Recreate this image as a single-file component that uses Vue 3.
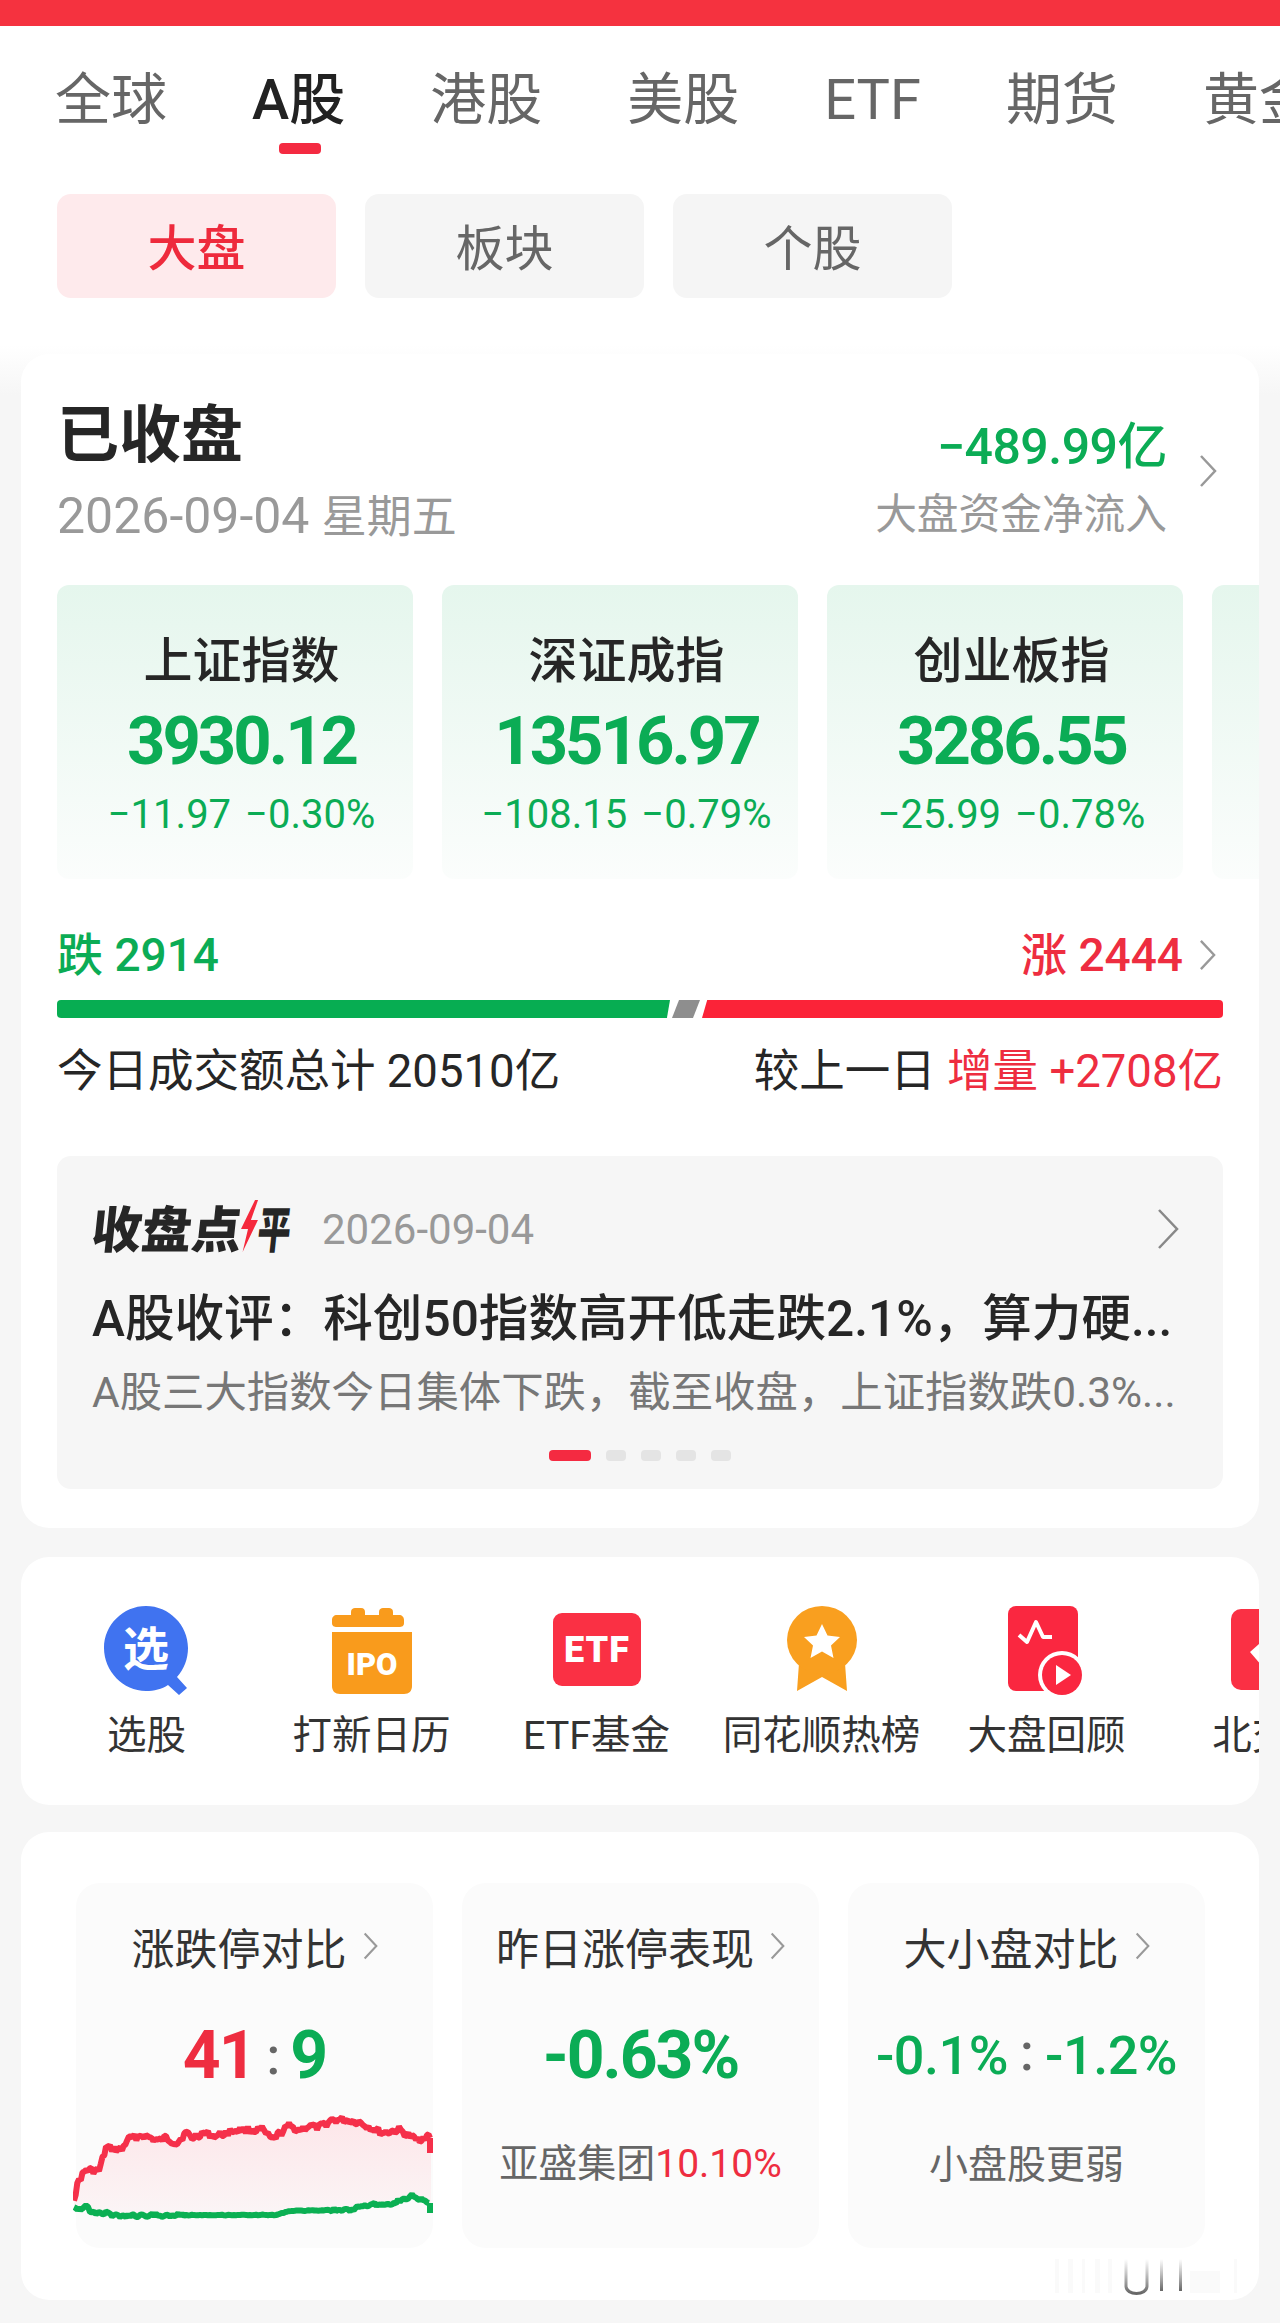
<script setup>
const tabs = ['全球', 'A股', '港股', '美股', 'ETF', '期货', '黄金']
const pills = ['大盘', '板块', '个股']
const indices = [
  { name: '上证指数', value: '3930.12', a: '−11.97', b: '−0.30%' },
  { name: '深证成指', value: '13516.97', a: '−108.15', b: '−0.79%' },
  { name: '创业板指', value: '3286.55', a: '−25.99', b: '−0.78%' },
  { name: '', value: '', a: '', b: '' }
]
const shortcuts = ['选股', '打新日历', 'ETF基金', '同花顺热榜', '大盘回顾', '北交所']

const redKeys = [[75,2200],[80,2182],[87,2172],[100,2173],[107,2150],[123,2152],[128,2142],[143,2137],[160,2143],[167,2140],[178,2145],[187,2135],[193,2140],[203,2135],[217,2138],[237,2132],[263,2132],[273,2142],[290,2128],[300,2132],[310,2128],[320,2130],[333,2122],[347,2122],[360,2124],[383,2135],[400,2132],[417,2142],[428,2138],[431,2140]]
const greenKeys = [[75,2208],[80,2211],[87,2208],[93,2215],[107,2215],[117,2218],[187,2217],[277,2217],[290,2213],[333,2212],[353,2212],[360,2208],[393,2205],[413,2198],[430,2205]]

function jagged(keys, amp, seed) {
  let s = seed
  const rnd = () => {
    s = (s * 9301 + 49297) % 233280
    return s / 233280 - 0.5
  }
  const pts = []
  for (let i = 0; i < keys.length - 1; i++) {
    const [x0, y0] = keys[i]
    const [x1, y1] = keys[i + 1]
    const n = Math.max(1, Math.round((x1 - x0) / 2))
    for (let j = 0; j < n; j++) {
      const t = j / n
      const a = typeof amp === 'function' ? amp(x0) : amp
      pts.push([x0 + (x1 - x0) * t, y0 + (y1 - y0) * t + rnd() * a])
    }
  }
  pts.push(keys[keys.length - 1])
  return pts
}
const fmt = p => p.map(q => q[0].toFixed(1) + ',' + q[1].toFixed(1)).join(' ')
const redPts = jagged(redKeys, 7, 17)
const greenPts = jagged(greenKeys, x => (x > 150 && x < 300 ? 0.8 : 3.5), 91)
const redLine = fmt(redPts)
const greenLine = fmt(greenPts)
const areaFill = redLine + ' 432,2155 432,2205 ' + greenKeys.slice().reverse().map(q => q.join(',')).join(' ')
</script>

<template>
  <div class="page">
    <div class="top-bar"></div>
    <div class="head">
      <div class="tabs">
        <span v-for="t in tabs" :key="t" class="tab" :class="{ on: t === 'A股' }">{{ t }}</span>
      </div>
      <div class="pills">
        <span v-for="p in pills" :key="p" class="pill" :class="{ on: p === '大盘' }">{{ p }}</span>
      </div>
    </div>

    <section class="card market">
      <div class="status">
        <div>
          <div class="closed">已收盘</div>
          <div class="date">2026-09-04 <span class="date-cn">星期五</span></div>
        </div>
        <div class="flow">
          <div class="flow-text">
            <div class="flow-num">−489.99亿</div>
            <div class="flow-label">大盘资金净流入</div>
          </div>
          <svg class="chev flow-chev" viewBox="0 0 18 32"><path d="M2 1 16 16 2 31" /></svg>
        </div>
      </div>

      <div class="indices">
        <div v-for="(it, i) in indices" :key="i" class="index">
          <div class="index-name">{{ it.name }}</div>
          <div class="index-value">{{ it.value }}</div>
          <div class="index-sub"><span>{{ it.a }}</span><span>{{ it.b }}</span></div>
        </div>
      </div>

      <div class="updown">
        <span class="green">跌 2914</span>
        <span class="up-right"><span class="red">涨 2444</span><svg class="chev small" viewBox="0 0 18 32"><path d="M2 1 16 16 2 31" /></svg></span>
      </div>
      <div class="bar">
        <div class="bar-g"></div>
        <div class="bar-m"></div>
        <div class="bar-r"></div>
      </div>
      <div class="turnover">
        <span>今日成交额总计 20510亿</span>
        <span>较上一日 <span class="red">增量 +2708亿</span></span>
      </div>

      <div class="review">
        <div class="review-head">
          <div class="logo">
            <span>收盘点</span>
            <svg class="bolt" viewBox="0 0 18 52"><path d="M12 0 1 29h7L5 52 17 20h-7l5-20z" /></svg>
            <span class="logo-end">平</span>
          </div>
          <span class="review-date">2026-09-04</span>
          <svg class="chev review-chev" viewBox="0 0 22 40"><path d="M2 1 20 20 2 39" /></svg>
        </div>
        <div class="review-title">A股收评：科创50指数高开低走跌2.1%，算力硬...</div>
        <div class="review-sub">A股三大指数今日集体下跌，截至收盘，上证指数跌0.3%...</div>
        <div class="dots"><i class="on"></i><i></i><i></i><i></i><i></i></div>
      </div>
    </section>

    <section class="card shortcuts">
      <div v-for="(s, i) in shortcuts" :key="s" class="shortcut">
        <svg v-if="i === 0" class="ico" viewBox="0 0 90 90">
          <path d="M44 1C21 1 2 20 2 43s19 43 42 43c8 0 16-2 22-6l11 10 8-7-10-11c7-8 11-18 11-29C86 20 67 1 44 1z" fill="#4073f0" />
          <text x="44" y="60" text-anchor="middle" class="ico-txt xuan">选</text>
        </svg>
        <svg v-else-if="i === 1" class="ico" viewBox="0 0 90 90">
          <path d="M24 7c0-3 2-4 4-4h6c3 0 4 2 4 4v3h14V7c0-3 2-4 4-4h6c2 0 4 1 4 4v3h6c3 0 5 2 5 5v3c0 3-2 4-5 4H10c-3 0-5-1-5-4v-3c0-3 2-5 5-5h14z" fill="#f99b1c" />
          <path d="M5 27h80v54c0 5-3 8-8 8H13c-5 0-8-3-8-8z" fill="#f99b1c" />
          <text x="45" y="70" text-anchor="middle" class="ico-txt ipo">IPO</text>
        </svg>
        <svg v-else-if="i === 2" class="ico" viewBox="0 0 90 90">
          <rect x="1" y="8" width="88" height="73" rx="9" fill="#fa3044" />
          <text x="45" y="57" text-anchor="middle" class="ico-txt etf">ETF</text>
        </svg>
        <svg v-else-if="i === 3" class="ico" viewBox="0 0 90 90">
          <path d="M22 58 20 86l25-14 25 14-2-28z" fill="#f99f1f" />
          <ellipse cx="45" cy="35" rx="35" ry="34" fill="#f99f1f" />
          <path d="M45 19l5.500 11.500 12.500 1.500-9 8.500 2.500 12.500L45 46.500 33.500 53 36 40.500 27 32l12.500-1.500z" fill="#fff" />
        </svg>
        <svg v-else-if="i === 4" class="ico" viewBox="0 0 90 90">
          <rect x="6" y="1" width="70" height="85" rx="8" fill="#fa2740" />
          <path d="M17 30l8 7 9-20 7 15h9" fill="none" stroke="#fff" stroke-width="4" stroke-linejoin="round" />
          <circle cx="60" cy="70" r="24" fill="#fff" />
          <circle cx="60" cy="70" r="20" fill="#fa2740" />
          <path d="M54 60l15 10-15 10z" fill="#fff" />
        </svg>
        <svg v-else class="ico" viewBox="0 0 90 90">
          <rect x="4" y="4" width="78" height="81" rx="10" fill="#fa3044" />
          <path d="M23 47 42 30l19 17-19 22z" fill="#fff" />
        </svg>
        <span class="shortcut-label">{{ s }}</span>
      </div>
    </section>

    <section class="card stats">
      <div class="tile">
        <div class="tile-title">涨跌停对比<svg class="chev tiny" viewBox="0 0 18 32"><path d="M2 1 16 16 2 31" /></svg></div>
        <div class="tile-num"><span class="red">41</span><span class="colon">:</span><span class="green">9</span></div>
        <svg class="chart" viewBox="74 2114 360 110">
          <defs>
            <linearGradient id="areaGrad" x1="0" y1="0" x2="0" y2="1">
              <stop offset="0" stop-color="#fde6e9" />
              <stop offset="1" stop-color="#fbf5f6" />
            </linearGradient>
          </defs>
          <polygon :points="areaFill" fill="url(#areaGrad)" />
          <polyline :points="greenLine" class="line" stroke="#0bb053" />
          <polyline :points="redLine" class="line" stroke="#f5304a" />
          <path d="M431 2140v15" stroke="#f5304a" stroke-width="6" />
          <path d="M431 2205v10" stroke="#0bb053" stroke-width="6" />
        </svg>
      </div>
      <div class="tile">
        <div class="tile-title">昨日涨停表现<svg class="chev tiny" viewBox="0 0 18 32"><path d="M2 1 16 16 2 31" /></svg></div>
        <div class="tile-num green">-0.63%</div>
        <div class="tile-sub">亚盛集团<span class="red">10.10%</span></div>
      </div>
      <div class="tile">
        <div class="tile-title">大小盘对比<svg class="chev tiny" viewBox="0 0 18 32"><path d="M2 1 16 16 2 31" /></svg></div>
        <div class="tile-num compact green">-0.1%<span class="colon">:</span>-1.2%</div>
        <div class="tile-sub">小盘股更弱</div>
      </div>
      <svg class="mark" viewBox="0 0 190 38" aria-hidden="true">
        <defs>
          <linearGradient id="markGrad" x1="0" y1="0" x2="0" y2="1">
            <stop offset="0" stop-color="#555" stop-opacity="0" />
            <stop offset="1" stop-color="#333" stop-opacity=".75" />
          </linearGradient>
        </defs>
        <g fill="#eee" opacity=".25">
          <rect x="5" y="2" width="4" height="34" /><rect x="18" y="2" width="5" height="34" /><rect x="32" y="2" width="3" height="34" />
          <rect x="45" y="2" width="5" height="34" /><rect x="58" y="2" width="4" height="34" /><rect x="140" y="14" width="30" height="22" />
          <rect x="184" y="2" width="3" height="34" />
        </g>
        <path d="M76 2v27c0 10 21 10 21 0V2" fill="none" stroke="url(#markGrad)" stroke-width="3" />
        <rect x="110" y="2" width="3" height="32" fill="url(#markGrad)" />
        <rect x="129" y="2" width="3" height="32" fill="url(#markGrad)" />
      </svg>
    </section>
  </div>
</template>

<style>
html, body { background: #f6f6f6; }
</style>

<style scoped>
.page {
  width: 1280px;
  height: 2323px;
  overflow: hidden;
  background: linear-gradient(#fff 345px, #f6f6f6 395px);
  font-family: "Noto Sans CJK SC", "Noto Sans", sans-serif;
  color: #262626;
}
.green { color: #0bac55; }
.red { color: #ee2d40; }
.top-bar { height: 26px; background: #f5323f; }
.head {
  height: 328px;
  box-sizing: border-box;
  padding: 42px 0 0 55px;
  overflow: hidden;
}
.tabs { display: flex; gap: 85px; height: 126px; white-space: nowrap; }
.tab {
  position: relative;
  font-family: "Roboto", "Noto Sans CJK SC", sans-serif;
  font-size: 56px;
  line-height: 64px;
  color: #666;
  height: 64px;
}
.tab.on { color: #222; font-weight: 500; }
.tab.on::after {
  content: "";
  position: absolute;
  left: 27px;
  top: 75px;
  width: 42px;
  height: 11px;
  border-radius: 4px;
  background: #f42a41;
}
.pills { display: flex; gap: 29px; margin-left: 2px; }
.pill {
  width: 279px;
  height: 104px;
  border-radius: 14px;
  background: #f5f5f5;
  color: #666;
  font-size: 49px;
  line-height: 102px;
  text-align: center;
}
.pill.on { background: #feeaec; color: #ee2a3c; font-weight: 500; }

.card { margin: 0 21px; background: #fff; border-radius: 28px; }
.market { height: 1174px; box-sizing: border-box; padding: 38px 36px 0; overflow: hidden; }
.status { display: flex; justify-content: space-between; height: 193px; }
.closed { font-size: 62px; line-height: 76px; font-weight: 700; color: #262626; }
.date { font-family: "Roboto", "Noto Sans CJK SC", sans-serif; font-size: 50px; line-height: 56px; margin-top: 20px; color: #999; white-space: nowrap; }
.date-cn { font-size: 45px; }
.flow { display: flex; gap: 32px; margin-right: 6px; }
.flow-text { text-align: right; padding-top: 26px; }
.flow-num { font-family: "Roboto", "Noto Sans CJK SC", sans-serif; font-size: 50px; line-height: 58px; font-weight: 500; color: #0bac55; letter-spacing: -0.5px; }
.flow-label { font-size: 41.700px; line-height: 54px; color: #999; margin-top: 8px; }
.chev { fill: none; stroke: #999; stroke-width: 2.500; }
.flow-chev { width: 18px; height: 32px; margin-top: 63px; }

.indices { display: flex; gap: 29px; height: 294px; margin-right: -36px; }
.index {
  flex: 0 0 356px;
  height: 294px;
  box-sizing: border-box;
  padding: 42px 0 0 13px;
  border-radius: 12px;
  text-align: center;
  background: linear-gradient(#e5f6ed, #fbfdfc);
}
.index-name { font-size: 49px; line-height: 60px; font-weight: 500; color: #262626; }
.index-value { font-family: "Roboto", sans-serif; font-size: 67px; line-height: 74px; font-weight: 700; letter-spacing: -3px; color: #0bac55; margin-top: 17px; }
.index-sub {
  display: flex;
  justify-content: center;
  gap: 14px;
  font-family: "Roboto", sans-serif;
  font-size: 40px;
  line-height: 46px;
  color: #0bac55;
  margin-top: 14px;
}

.updown { display: flex; justify-content: space-between; height: 75px; margin-top: 46px; font-family: "Roboto", "Noto Sans CJK SC", sans-serif; font-size: 46px; line-height: 60px; font-weight: 500; }
.up-right { display: flex; align-items: center; height: 60px; gap: 16px; margin-right: 7px; }
.small { width: 17px; height: 32px; }
.bar { display: flex; height: 18px; gap: 2px; }
.bar-g { width: 613px; background: #07ad52; border-radius: 4px 0 0 4px; clip-path: polygon(0 0, 100% 0, 99.500% 100%, 0 100%); }
.bar-m { width: 28px; margin-left: 0; background: #8e8e8e; clip-path: polygon(25% 0, 100% 0, 75% 100%, 0 100%); }
.bar-r { flex: 1; background: #fb2338; border-radius: 0 4px 4px 0; clip-path: polygon(1% 0, 100% 0, 100% 100%, 0 100%); }
.turnover { display: flex; justify-content: space-between; font-family: "Roboto", "Noto Sans CJK SC", sans-serif; font-size: 45.500px; line-height: 60px; margin-top: 24px; color: #262626; }

.review {
  position: relative;
  height: 333px;
  box-sizing: border-box;
  margin-top: 54px;
  padding: 41px 35px 0;
  background: #f6f6f6;
  border-radius: 14px;
}
.review-head { display: flex; align-items: center; height: 64px; }
.logo {
  display: flex;
  align-items: center;
  font-size: 50px;
  line-height: 60px;
  font-weight: 900;
  color: #262626;
  transform: skewX(-6deg) translateY(-3px);
  width: 200px;
  flex: none;
  white-space: nowrap;
}
.bolt { width: 18px; height: 52px; fill: #f5293c; flex: none; margin-left: -2px; }
.logo-end { display: inline-block; transform: scaleX(.66); transform-origin: left center; }
.review-date { font-family: "Roboto", sans-serif; font-size: 42px; color: #999; margin-left: 30px; }
.review-chev { width: 22px; height: 40px; margin-left: auto; margin-right: 9px; stroke: #888; }
.review-title { font-family: "Roboto", "Noto Sans CJK SC", sans-serif; font-size: 49.600px; line-height: 60px; font-weight: 500; color: #262626; margin-top: 28px; white-space: nowrap; }
.review-sub { font-family: "Roboto", "Noto Sans CJK SC", sans-serif; font-size: 42.400px; line-height: 56px; color: #777; margin-top: 16px; white-space: nowrap; }
.dots { position: absolute; top: 294px; left: 492px; display: flex; gap: 15px; }
.dots i { display: block; width: 20px; height: 11px; border-radius: 4px; background: #e4e4e4; }
.dots i.on { width: 42px; background: #f42a41; }

.shortcuts { height: 248px; margin-top: 29px; box-sizing: border-box; padding: 48px 0 0 0; display: flex; overflow: hidden; }
.shortcut { flex: 0 0 225px; display: flex; flex-direction: column; align-items: center; }
.shortcut:first-child { margin-left: 13px; }
.ico { width: 90px; height: 90px; display: block; }
.ico-txt { fill: #fff; font-weight: 700; }
.xuan { font-size: 46px; font-family: "Noto Sans CJK SC", sans-serif; }
.ipo { font-size: 31px; font-family: "Roboto", sans-serif; font-weight: 900; }
.etf { font-size: 36px; font-family: "Roboto", sans-serif; font-weight: 900; letter-spacing: 1px; }
.shortcut-label { font-family: "Roboto", "Noto Sans CJK SC", sans-serif; font-size: 39.500px; line-height: 50px; color: #333; margin-top: 16px; white-space: nowrap; }

.stats {
  position: relative;
  height: 468px;
  margin-top: 27px;
  box-sizing: border-box;
  padding: 51px 54px 0 55px;
  display: grid;
  grid-template-columns: repeat(3, 357px);
  column-gap: 29px;
}
.tile { position: relative; height: 365px; border-radius: 24px; background: #fbfbfb; text-align: center; }
.tile-title {
  display: flex;
  align-items: center;
  justify-content: center;
  gap: 16px;
  font-size: 43px;
  line-height: 56px;
  color: #333;
  padding-top: 35px;
}
.tiny { width: 15px; height: 28px; }
.tile-num { font-family: "Roboto", sans-serif; font-size: 66px; line-height: 72px; font-weight: 700; letter-spacing: -2px; margin-top: 46px; white-space: nowrap; }
.tile-num.compact { font-size: 54px; font-weight: 500; letter-spacing: -0.5px; }
.colon { color: #666; font-size: 52px; margin: 0 12px; font-weight: 500; position: relative; top: -4px; }
.tile-sub { font-family: "Roboto", "Noto Sans CJK SC", sans-serif; font-size: 39px; line-height: 50px; color: #666; margin-top: 47px; }
.chart { position: absolute; left: -3px; top: 229px; width: 360px; height: 110px; display: block; }
.line { fill: none; stroke-width: 6; stroke-linejoin: bevel; }
.mark { position: absolute; left: 1029px; top: 425px; width: 190px; height: 38px; }
</style>
